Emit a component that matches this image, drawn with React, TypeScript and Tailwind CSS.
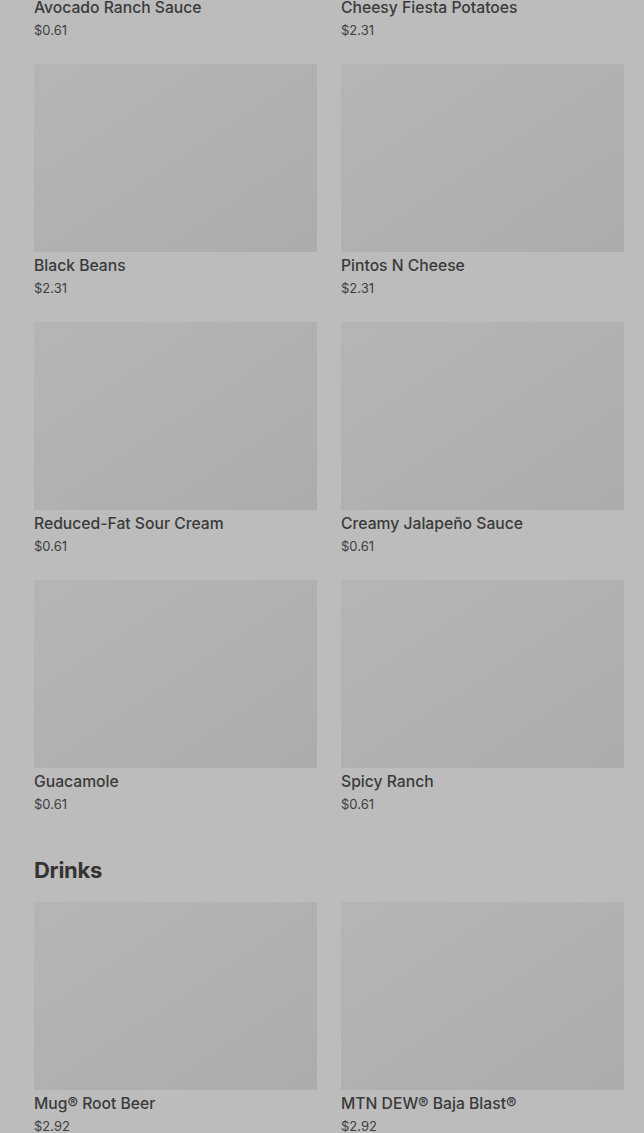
import React from "react";

type Item = { name: string; price: string };

const sides: Item[][] = [
  [
    { name: "Avocado Ranch Sauce", price: "$0.61" },
    { name: "Cheesy Fiesta Potatoes", price: "$2.31" },
  ],
  [
    { name: "Black Beans", price: "$2.31" },
    { name: "Pintos N Cheese", price: "$2.31" },
  ],
  [
    { name: "Reduced-Fat Sour Cream", price: "$0.61" },
    { name: "Creamy Jalapeño Sauce", price: "$0.61" },
  ],
  [
    { name: "Guacamole", price: "$0.61" },
    { name: "Spicy Ranch", price: "$0.61" },
  ],
];

const drinks: Item[] = [
  { name: "Mug® Root Beer", price: "$2.92" },
  { name: "MTN DEW® Baja Blast®", price: "$2.92" },
];

function Card({ item }: { item: Item }) {
  return (
    <div className="flex flex-col">
      <div className="h-[188px] bg-gradient-to-br from-[#b5b5b5] to-[#acacac]" />
      <div className="mt-[3px] text-[15.7px] leading-[22px] font-medium text-[#3a3a3a]">
        {item.name}
      </div>
      <div className="mt-[2px] text-[13px] leading-[18px] text-[#3f3f3f]">{item.price}</div>
    </div>
  );
}

export default function App() {
  return (
    <div
      className="min-h-[1133px] w-full overflow-hidden bg-[#bcbcbc] pl-[34px] pr-[20px]"
      style={{ fontFamily: "Inter, 'Noto Sans', sans-serif" }}
    >
      <div className="mt-[-194px] grid grid-cols-2 gap-x-[24px] gap-y-[25px]">
        {sides.flat().map((it) => (
          <Card key={it.name} item={it} />
        ))}
      </div>
      <h2 className="mt-[41px] text-[22px] leading-[32px] font-bold text-[#333333] tracking-[-0.3px]">
        Drinks
      </h2>
      <div className="mt-[16px] grid grid-cols-2 gap-x-[24px] gap-y-[25px]">
        {drinks.map((it) => (
          <Card key={it.name} item={it} />
        ))}
      </div>
    </div>
  );
}
